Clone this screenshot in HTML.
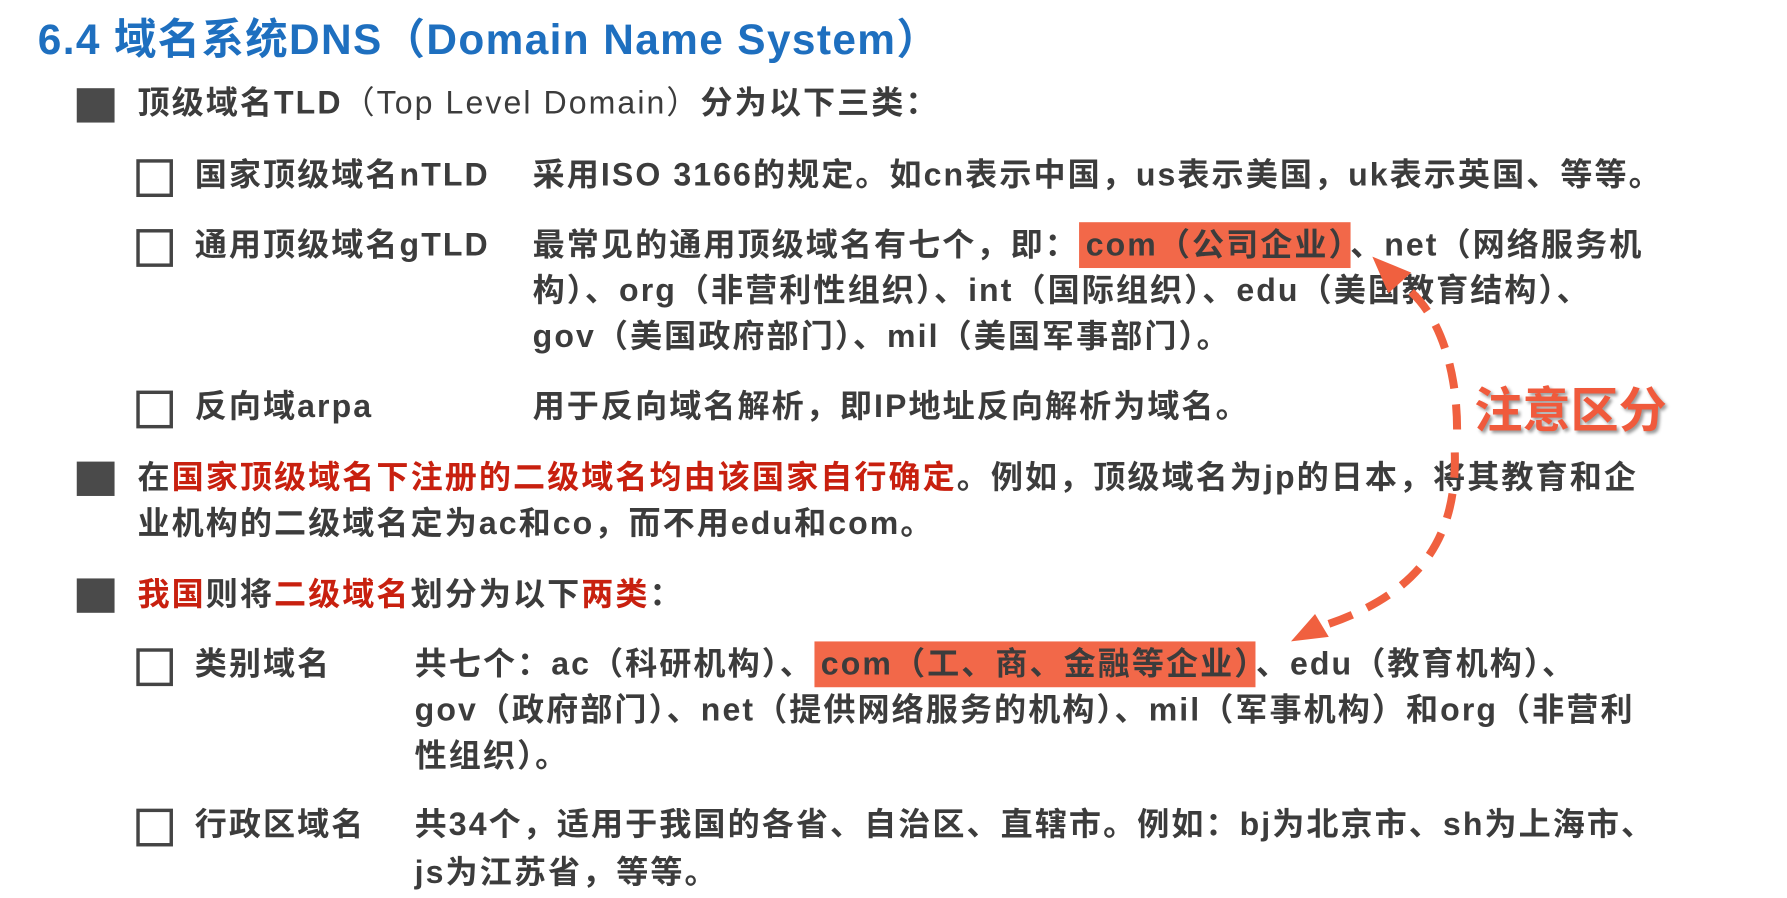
<!DOCTYPE html>
<html><head><meta charset="utf-8">
<style>
html,body{margin:0;padding:0;background:#fff;width:1787px;height:898px;overflow:hidden}
#w{position:absolute;left:0;top:0;width:1560px;height:784px;transform-origin:0 0;transform:scale(1.14551,1.14541);
font-family:"Liberation Sans","Noto Sans CJK SC",sans-serif;font-weight:bold;color:#3c3c3c}
.t{position:absolute;white-space:nowrap;font-size:28px;line-height:40px;letter-spacing:1.8px}
.title{position:absolute;left:33px;top:4px;font-size:37px;color:#1e6fbf;font-weight:bold;white-space:nowrap;letter-spacing:1.2px}
.big{position:absolute;left:67px;width:33px;height:30px;background:#4a4a4a}
.cb{position:absolute;left:119px;width:26px;height:27px;border:3px solid #444;background:#fff}
.r{color:#c8200f}
.hl{background:#f26849;padding:4px 3px 5px 6px}
.zy{position:absolute;left:1287px;top:325px;font-size:42px;color:#f05a3c;font-weight:bold;white-space:nowrap;
text-shadow:2px 2px 3px #999,-1px -1px 0 #fff,1px -1px 0 #fff,-1px 1px 0 #fff}
</style></head><body><div id="w">
<div class="title">6.4 域名系统DNS（Domain Name System）</div>

<div class="big" style="top:77px"></div>
<div class="t" style="left:120px;top:70px">顶级域名TLD<span style="font-weight:normal">（Top Level Domain）</span>分为以下三类：</div>

<div class="cb" style="top:139px"></div>
<div class="t" style="left:170px;top:133px">国家顶级域名nTLD</div>
<div class="t" style="left:465px;top:133px">采用ISO 3166的规定。如cn表示中国，us表示美国，uk表示英国、等等。</div>

<div class="cb" style="top:200px"></div>
<div class="t" style="left:170px;top:194px">通用顶级域名gTLD</div>
<div class="t" style="left:465px;top:194px">最常见的通用顶级域名有七个，即：<span class="hl">com（公司企业）</span>、net（网络服务机</div>
<div class="t" style="left:465px;top:234px">构）、org（非营利性组织）、int（国际组织）、edu（美国教育结构）、</div>
<div class="t" style="left:465px;top:274px">gov（美国政府部门）、mil（美国军事部门）。</div>

<div class="cb" style="top:341px"></div>
<div class="t" style="left:170px;top:335px">反向域arpa</div>
<div class="t" style="left:465px;top:335px">用于反向域名解析，即IP地址反向解析为域名。</div>

<div class="big" style="top:403px"></div>
<div class="t" style="left:120px;top:397px">在<span class="r">国家顶级域名下注册的二级域名均由该国家自行确定</span>。例如，顶级域名为jp的日本，将其教育和企</div>
<div class="t" style="left:120px;top:437px">业机构的二级域名定为ac和co，而不用edu和com。</div>

<div class="big" style="top:505px"></div>
<div class="t" style="left:120px;top:499px"><span class="r">我国</span>则将<span class="r">二级域名</span>划分为以下<span class="r">两类</span>：</div>

<div class="cb" style="top:566px"></div>
<div class="t" style="left:170px;top:560px">类别域名</div>
<div class="t" style="left:362px;top:560px">共七个：ac（科研机构）、<span class="hl">com（工、商、金融等企业）</span>、edu（教育机构）、</div>
<div class="t" style="left:362px;top:600px">gov（政府部门）、net（提供网络服务的机构）、mil（军事机构）和org（非营利</div>
<div class="t" style="left:362px;top:640px">性组织）。</div>

<div class="cb" style="top:706px"></div>
<div class="t" style="left:170px;top:700px">行政区域名</div>
<div class="t" style="left:362px;top:700px">共34个，适用于我国的各省、自治区、直辖市。例如：bj为北京市、sh为上海市、</div>
<div class="t" style="left:362px;top:742px">js为江苏省，等等。</div>

<svg style="position:absolute;left:0;top:0" width="1560" height="784">
<g fill="none" stroke="#f0603f" stroke-width="7" stroke-dasharray="22 14">
<path d="M1272,375 C1272,320 1255,265 1218,245"/>
<path d="M1270,395 C1272,470 1240,520 1150,548"/>
</g>
<polygon points="1198,224 1232,238 1212,256" fill="#f0603f"/>
<polygon points="1127,560 1148,536 1160,556" fill="#f0603f"/>
</svg>
<div class="zy">注意区分</div>
</div></body></html>
